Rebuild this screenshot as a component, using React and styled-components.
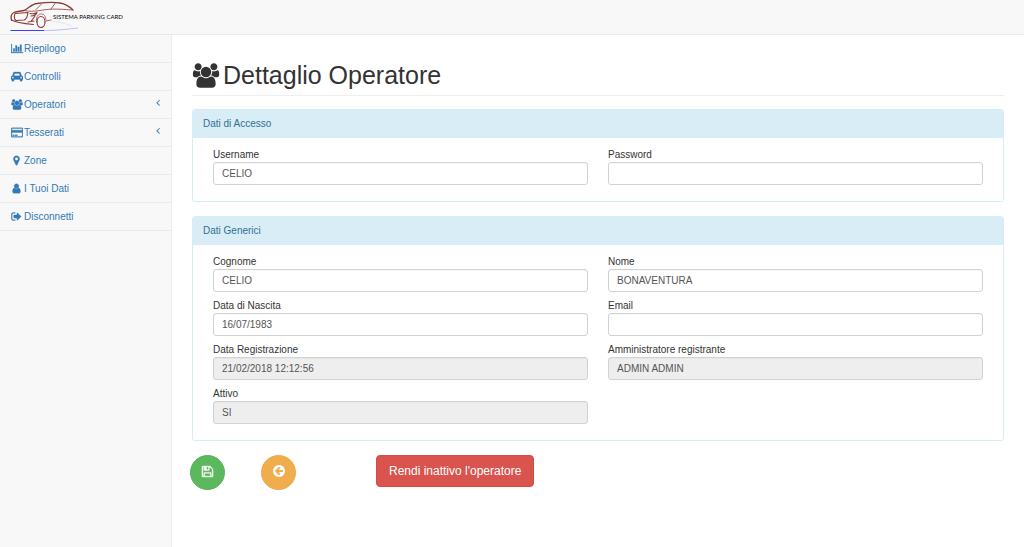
import React, { useId } from 'react';
import styled, { createGlobalStyle, css } from 'styled-components';

const GlobalStyle = createGlobalStyle`
  *, *::before, *::after { box-sizing: border-box; }
  body {
    margin: 0;
    background: #fff;
    color: #333;
    font-family: "Liberation Sans", Arial, sans-serif;
    font-size: 10px;
    line-height: 14px;
  }
  input, button { font-family: inherit; }
`;

const glyphs = {
  chart: { w: 2048, d: 'M640 896v512h-256v-512h256zm384-512v1024h-256v-1024h256zm1024 1152v128h-2048v-1536h128v1408h1920zm-640-896v768h-256v-768h256zm384-384v1152h-256v-1152h256z' },
  car: { w: 2048, d: 'M480 1088q0-66-47-113t-113-47-113 47-47 113 47 113 113 47 113-47 47-113zm36-320h1016l-89-357q-2-8-14-17.5t-21-9.5h-768q-9 0-21 9.5t-14 17.5zm1372 320q0-66-47-113t-113-47-113 47-47 113 47 113 113 47 113-47 47-113zm160-96v384q0 14-9 23t-23 9h-96v128q0 80-56 136t-136 56-136-56-56-136v-128h-1024v128q0 80-56 136t-136 56-136-56-56-136v-128h-96q-14 0-23-9t-9-23v-384q0-93 65.5-158.5t158.5-65.5h28l105-419q23-94 104-157.5t179-63.5h768q98 0 179 63.5t104 157.5l105 419h28q93 0 158.5 65.5t65.5 158.5z' },
  users: { w: 2048, d: 'M657 896q-162 5-265 128h-134q-82 0-138-40.5t-56-118.5q0-353 124-353 6 0 43.5 21t97.5 42.5 119 21.5q67 0 133-23-5 37-5 66 0 159 90 256zm1071 637q0 120-73 189.5t-194 69.5h-874q-121 0-194-69.5t-73-189.5q0-53 3.5-103.5t14-109 26.5-108.5 43-97.5 62-81 85.5-53.5 111.5-20q10 0 43 21.5t73 48 107 48 135 21.5 135-21.5 107-48 73-48 43-21.5q61 0 111.5 20t85.5 53.5 62 81 43 97.5 26.5 108.5 14 109 3.5 103.5zm-1024-1277q0 106-75 181t-181 75-181-75-75-181 75-181 181-75 181 75 75 181zm704 384q0 159-112.5 271.5t-271.5 112.5-271.5-112.5-112.5-271.5 112.5-271.5 271.5-112.5 271.5 112.5 112.5 271.5zm576 225q0 78-56 118.5t-138 40.5h-134q-103-123-265-128 90-97 90-256 0-29-5-66 66 23 133 23 59 0 119-21.5t97.5-42.5 43.5-21q124 0 124 353zm-128-609q0 106-75 181t-181 75-181-75-75-181 75-181 181-75 181 75 75 181z' },
  card: { w: 1920, d: 'M1760 128q66 0 113 47t47 113v1216q0 66-47 113t-113 47h-1600q-66 0-113-47t-47-113v-1216q0-66 47-113t113-47h1600zm-1600 128q-13 0-22.5 9.5t-9.5 22.5v224h1664v-224q0-13-9.5-22.5t-22.5-9.5h-1600zm1600 1280q13 0 22.5-9.5t9.5-22.5v-608h-1664v608q0 13 9.5 22.5t22.5 9.5h1600zm-1504-128v-128h256v128h-256zm384 0v-128h384v128h-384z' },
  marker: { w: 1792, d: 'M1152 640q0-106-75-181t-181-75-181 75-75 181 75 181 181 75 181-75 75-181zm256 0q0 109-33 179l-364 774q-16 33-47.5 52t-67.5 19-67.5-19-46.5-52l-365-774q-33-70-33-179 0-212 150-362t362-150 362 150 150 362z' },
  user: { w: 1792, d: 'M1536 1399q0 109-62.5 187t-150.5 78h-854q-88 0-150.5-78t-62.5-187q0-85 8.5-160.5t31.5-152 58.5-131 94-89 134.5-34.5q131 128 313 128t313-128q76 0 134.5 34.5t94 89 58.5 131 31.5 152 8.5 160.5zm-256-887q0 159-112.5 271.5t-271.5 112.5-271.5-112.5-112.5-271.5 112.5-271.5 271.5-112.5 271.5 112.5 112.5 271.5z' },
  signOut: { w: 1792, d: 'M704 1440q0 4 1 20t.5 26.5-3 23.5-10 19.5-20.5 6.5h-320q-119 0-203.5-84.5t-84.5-203.5v-704q0-119 84.5-203.5t203.5-84.5h320q13 0 22.5 9.5t9.5 22.5q0 4 1 20t.5 26.5-3 23.5-10 19.5-20.5 6.5h-320q-66 0-113 47t-47 113v704q0 66 47 113t113 47h312l11.5 1 11.5 3 8 5.5 7 9 2 13.5zm928-544q0 26-19 45l-544 544q-19 19-45 19t-45-19-19-45v-288h-448q-26 0-45-19t-19-45v-384q0-26 19-45t45-19h448v-288q0-26 19-45t45-19 45 19l544 544q19 19 19 45z' },
  angleLeft: { w: 1792, d: 'M1203 544q0 13-10 23l-393 393 393 393q10 10 10 23t-10 23l-50 50q-10 10-23 10t-23-10l-466-466q-10-10-10-23t10-23l466-466q10-10 23-10t23 10l50 50q10 10 10 23z' },
  save: { w: 1792, d: 'M512 1536h768v-384h-768v384zm896 0h128v-896q0-14-10-38.5t-20-34.5l-281-281q-10-10-34-20t-39-10v416q0 40-28 68t-68 28h-576q-40 0-68-28t-28-68v-416h-128v1280h128v-416q0-40 28-68t68-28h832q40 0 68 28t28 68v416zm-384-928v-320q0-13-9.5-22.5t-22.5-9.5h-192q-13 0-22.5 9.5t-9.5 22.5v320q0 13 9.5 22.5t22.5 9.5h192q13 0 22.5-9.5t9.5-22.5zm640 32v928q0 40-28 68t-68 28h-1344q-40 0-68-28t-28-68v-1344q0-40 28-68t68-28h928q40 0 88 20t76 48l280 280q28 28 48 76t20 88z' },
  back: { w: 1792, d: 'M1408 960v-128q0-26-19-45t-45-19h-502l189-189q19-19 19-45t-19-45l-91-91q-18-18-45-18t-45 18l-362 362-91 91q-18 18-18 45t18 45l91 91 362 362q18 18 45 18t45-18l91-91q18-18 18-45t-18-45l-189-189h502q26 0 45-19t19-45zm256-64q0 209-103 385.5t-279.5 279.5-385.5 103-385.5-103-279.5-279.5-103-385.5 103-385.5 279.5-279.5 385.5-103 385.5 103 279.5 279.5 103 385.5z' },
};

const Svg = styled.svg`
  display: block;
  flex: none;
  fill: currentColor;
  stroke: currentColor;
`;

const Icon = ({ name, width, height, weight = 0 }) => (
  <Svg width={width} height={height} viewBox={`0 0 ${glyphs[name].w} 1792`} strokeWidth={weight} aria-hidden="true">
    <path d={glyphs[name].d} />
  </Svg>
);

const Page = styled.div`
  min-height: 100vh;
  display: flex;
  flex-direction: column;
`;

const Navbar = styled.header`
  height: 35px;
  flex: none;
  background: #f8f8f8;
  border-bottom: 1px solid #e9e9e9;
`;

const Brand = styled.a`
  display: inline-flex;
  align-items: center;
  padding-left: 10px;
  height: 34px;
  color: #222;
  text-decoration: none;
`;

const LogoArt = styled.svg`
  display: block;
  flex: none;
  margin-right: -27px;
`;

const LogoText = styled.span`
  font: 6px/8px Lato, "Liberation Sans", sans-serif;
  color: #000;
  white-space: nowrap;
`;

const Body = styled.div`
  flex: 1;
  display: flex;
`;

const Sidebar = styled.nav`
  width: 172px;
  flex: none;
  background: #f8f8f8;
  border-right: 1px solid #ebebeb;
`;

const Menu = styled.ul`
  list-style: none;
  margin: 0;
  padding: 0;
`;

const MenuItem = styled.li`
  border-bottom: 1px solid #ebebeb;
`;

const MenuLink = styled.a`
  display: flex;
  align-items: center;
  height: 27px;
  padding: 0 8px 0 10px;
  color: #337ab7;
  text-decoration: none;
`;

const MenuIcon = styled.span`
  display: flex;
  justify-content: center;
  width: 13px;
  margin-right: 1px;
`;

const Arrow = styled.span`
  margin-left: auto;
  padding-bottom: 4px;
`;

const Main = styled.main`
  flex: 1;
  min-width: 0;
  padding: 25px 20px 20px;
`;

const PageHeader = styled.h1`
  display: flex;
  align-items: center;
  gap: 3px;
  margin: 0 0 13px;
  padding-bottom: 5px;
  border-bottom: 1px solid #eee;
  font-size: 25px;
  font-weight: 400;
  line-height: 30px;
`;

const Panel = styled.section`
  margin-bottom: 14px;
  border: 1px solid #d5eef3;
  border-radius: 3px;
  background: #fff;
`;

const PanelHeading = styled.h2`
  margin: 0;
  padding: 7px 10px;
  background: #d9edf7;
  border-radius: 2px 2px 0 0;
  color: #31708f;
  font-size: 10px;
  font-weight: 400;
  line-height: 14px;
`;

const Fields = styled.div`
  display: grid;
  grid-template-columns: 1fr 1fr;
  gap: 7px 20px;
  padding: 10px 20px 16px;
`;

const FieldBox = styled.div`
  display: flex;
  flex-direction: column;
`;

const Label = styled.label`
  line-height: 14px;
`;

const Input = styled.input`
  width: 100%;
  height: 23px;
  padding: 0 8px;
  border: 1px solid #d2d2d2;
  border-radius: 3px;
  background: #fff;
  color: #555;
  font-size: 10px;
  box-shadow: inset 0 1px 1px rgba(0, 0, 0, 0.03);
  outline: none;

  &:read-only { background: #eee; }
`;

const Field = ({ label, ...rest }) => {
  const id = useId();
  return (
    <FieldBox>
      <Label htmlFor={id}>{label}</Label>
      <Input id={id} {...rest} />
    </FieldBox>
  );
};

const Actions = styled.div`
  display: flex;
  align-items: flex-start;
  margin-left: -2px;
`;

const tones = {
  success: css`background: #5cb85c; border-color: #58b458;`,
  warning: css`background: #f0ad4e; border-color: #efa945;`,
  danger: css`background: #d9534f; border-color: #d64a46;`,
};

const Button = styled.button`
  display: flex;
  align-items: center;
  justify-content: center;
  border: 1px solid;
  color: #fff;
  cursor: pointer;
  ${({ $tone }) => tones[$tone]}
`;

const RoundButton = styled(Button)`
  width: 35px;
  height: 35px;
  margin-right: 36px;
  padding: 0 0 3px;
  border-radius: 50%;
`;

const WideButton = styled(Button)`
  height: 32px;
  margin-left: 44px;
  padding: 0 12px;
  border-radius: 4px;
  font-size: 12px;
`;

const menu = [
  { icon: 'chart', label: 'Riepilogo', w: 12 },
  { icon: 'car', label: 'Controlli', w: 12 },
  { icon: 'users', label: 'Operatori', w: 12, open: true },
  { icon: 'card', label: 'Tesserati', w: 12, open: true },
  { icon: 'marker', label: 'Zone', w: 11 },
  { icon: 'user', label: 'I Tuoi Dati', w: 11 },
  { icon: 'signOut', label: 'Disconnetti', w: 11 },
];

const Logo = () => (
  <LogoArt width="70" height="34" viewBox="10 0 70 34" fill="none" aria-hidden="true">
    <g stroke="#8c3a3a" strokeLinecap="round" strokeLinejoin="round">
      <path d="M11.5 20C10.500 16 12 13 15 12l9-1.500C29 8 32 4 37 3.500c8-1 17-1.500 23-.5 6 1 10 4 13 7" strokeWidth="1.300" />
      <path d="M24 10.500c5 1 10 1 16 0 8-1.500 15-2 32-.5M36 9.500l5-5M51 9l4-5.500" strokeWidth=".8" />
      <path d="M15 13.500l13-1c-.5 4-2 7-4 7.500l-8 .5c-2-1-2-5-1-7z" strokeWidth="1.100" />
      <path d="M30 13.500c3 .5 5 .5 7-1-1 2.500-3 3.500-6 3.500M11.500 20c4 2.500 12 3.500 22 4.500M31 21.500l4-5.500M28 22l6-1" strokeWidth="1.100" />
      <ellipse cx="41" cy="22" rx="4" ry="5.500" strokeWidth="1.200" />
      <path d="M36.500 22c-1-5 2-8.500 5-8 3 0 4 2.500 4.500 5.500" strokeWidth=".7" />
      <path d="M46 21l5-1" strokeWidth=".8" />
    </g>
    <path d="M50 21c8 .5 14 2 22 5" stroke="#ecd9d9" strokeWidth=".7" />
    <path d="M10.500 30.500H44" stroke="#3f3ff2" strokeWidth="1.200" />
    <path d="M44 30.500c14 0 24-1.500 34-2.500" stroke="#b4b4f4" strokeWidth=".9" />
  </LogoArt>
);

export default function App() {
  return (
    <Page>
      <GlobalStyle />
      <Navbar>
        <Brand href="#">
          <Logo />
          <LogoText>SISTEMA PARKING CARD</LogoText>
        </Brand>
      </Navbar>
      <Body>
        <Sidebar>
          <Menu>
            {menu.map((item) => (
              <MenuItem key={item.label}>
                <MenuLink href="#">
                  <MenuIcon><Icon name={item.icon} width={item.w} height={11} weight={50} /></MenuIcon>
                  {item.label}
                  {item.open && <Arrow><Icon name="angleLeft" width={10} height={11} weight={50} /></Arrow>}
                </MenuLink>
              </MenuItem>
            ))}
          </Menu>
        </Sidebar>
        <Main>
          <PageHeader>
            <Icon name="users" width={28} height={25} />
            Dettaglio Operatore
          </PageHeader>
          <Panel>
            <PanelHeading>Dati di Accesso</PanelHeading>
            <Fields>
              <Field label="Username" defaultValue="CELIO" />
              <Field label="Password" type="password" />
            </Fields>
          </Panel>
          <Panel>
            <PanelHeading>Dati Generici</PanelHeading>
            <Fields>
              <Field label="Cognome" defaultValue="CELIO" />
              <Field label="Nome" defaultValue="BONAVENTURA" />
              <Field label="Data di Nascita" defaultValue="16/07/1983" />
              <Field label="Email" type="email" />
              <Field label="Data Registrazione" defaultValue="21/02/2018 12:12:56" readOnly />
              <Field label="Amministratore registrante" defaultValue="ADMIN ADMIN" readOnly />
              <Field label="Attivo" defaultValue="SI" readOnly />
            </Fields>
          </Panel>
          <Actions>
            <RoundButton type="button" $tone="success" aria-label="Salva">
              <Icon name="save" width={13} height={13} weight={50} />
            </RoundButton>
            <RoundButton type="button" $tone="warning" aria-label="Indietro">
              <Icon name="back" width={14} height={14} />
            </RoundButton>
            <WideButton type="button" $tone="danger">Rendi inattivo l'operatore</WideButton>
          </Actions>
        </Main>
      </Body>
    </Page>
  );
}
